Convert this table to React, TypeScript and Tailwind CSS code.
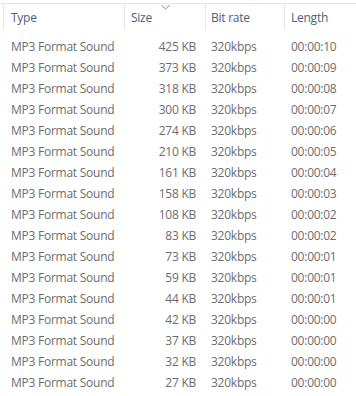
const rows = [
  ["425 KB", "00:00:10"],
  ["373 KB", "00:00:09"],
  ["318 KB", "00:00:08"],
  ["300 KB", "00:00:07"],
  ["274 KB", "00:00:06"],
  ["210 KB", "00:00:05"],
  ["161 KB", "00:00:04"],
  ["158 KB", "00:00:03"],
  ["108 KB", "00:00:02"],
  ["83 KB", "00:00:02"],
  ["73 KB", "00:00:01"],
  ["59 KB", "00:00:01"],
  ["44 KB", "00:00:01"],
  ["42 KB", "00:00:00"],
  ["37 KB", "00:00:00"],
  ["32 KB", "00:00:00"],
  ["27 KB", "00:00:00"],
];

export default function App() {
  return (
    <div className="w-[356px] h-[396px] bg-white overflow-hidden pt-[3px] font-['Open_Sans',sans-serif] text-[12px] tracking-[-0.25px]">
      {/* column headers */}
      <div className="flex h-[27px] border-t border-[#e5e5e5] text-[#4c607a]">
        <div className="w-[121px] ml-[3px] border-l border-[#e5e5e5] pl-[7px] pt-[2px] flex items-center">Type</div>
        <div className="relative w-[81px] border-l border-[#e5e5e5] pl-[6px] pt-[2px] flex items-center">
          Size
          <svg className="absolute left-[36px] top-[1px]" width="9" height="5" viewBox="0 0 9 5">
            <path d="M0.5 0.5 L4.5 4 L8.5 0.5" fill="none" stroke="#8a8a8a" strokeWidth="1" />
          </svg>
        </div>
        <div className="w-[79px] border-l border-[#e5e5e5] pl-[5px] pt-[2px] flex items-center">Bit rate</div>
        <div className="flex-1 border-l border-[#e5e5e5] pl-[6px] pt-[2px] flex items-center">Length</div>
      </div>

      {/* file rows */}
      <div className="mt-[6px] text-[#6d6d6d]">
        {rows.map(([size, length], i) => (
          <div key={i} className="flex h-[21px] items-center">
            <div className="w-[124px] pl-[11px]">MP3 Format Sound</div>
            <div className="w-[72px] text-right">{size}</div>
            <div className="w-[95px] pl-[15px]">320kbps</div>
            <div className="flex-1">{length}</div>
          </div>
        ))}
      </div>
    </div>
  );
}
